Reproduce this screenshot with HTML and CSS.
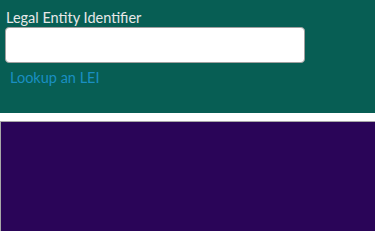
FILE: index.html
```html
<!DOCTYPE html>
<html lang="en">
<head>
  <meta charset="UTF-8">
  <title>LEI</title>
  <link rel="stylesheet" href="styles.css">
</head>
<body>

  <div class="lei-form">
    <label class="lei-label" for="lei">Legal Entity Identifier</label>
    <input class="lei-input" id="lei" type="text">
    <a class="lei-link" href="#">Lookup an LEI</a>
  </div>

  <div class="results"></div>

</body>
</html>
```

FILE: styles.css
```css
html, body {
  height: 100%;
}

body {
  font-family: Lato, 'Noto Sans', sans-serif;
  margin: 0;
  padding: 0;
  background-color: white;
  display: flex;
  flex-direction: column;
}

.lei-form {
  background-color: #075e54;
  height: 113px;
  padding: 8px 0 0 5px;
  box-sizing: border-box;
  display: flex;
  flex-direction: column;
  align-items: flex-start;
}

.lei-label {
  color: #e8e8e8;
  font-size: 14.5px;
  line-height: 19px;
  padding-left: 1px;
}

.lei-input {
  width: 300px;
  height: 36px;
  box-sizing: border-box;
  border: 1px solid #a0a0a0;
  border-radius: 4px;
  background: white;
  margin: 0;
}

.lei-link {
  color: #1a8fc2;
  font-size: 14.5px;
  text-decoration: none;
  margin: 6px 0 0 5px;
}

.results {
  flex: 1;
  margin-top: 8px;
  background-color: #2a0558;
  border-top: 1px solid #a8a8a8;
  border-left: 1px solid #a8a8a8;
}
```
